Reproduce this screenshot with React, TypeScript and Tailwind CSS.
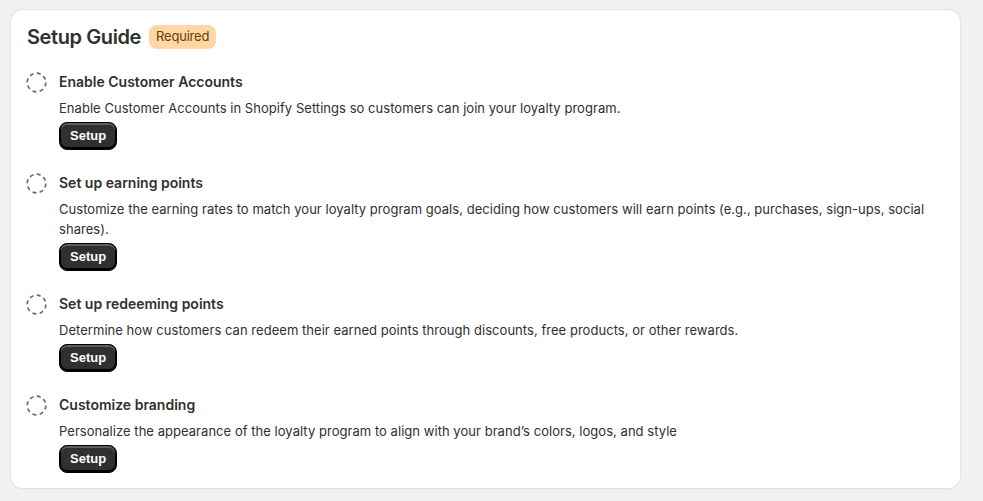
const steps = [
  {
    title: "Enable Customer Accounts",
    desc: "Enable Customer Accounts in Shopify Settings so customers can join your loyalty program.",
  },
  {
    title: "Set up earning points",
    desc: "Customize the earning rates to match your loyalty program goals, deciding how customers will earn points (e.g., purchases, sign-ups, social shares).",
  },
  {
    title: "Set up redeeming points",
    desc: "Determine how customers can redeem their earned points through discounts, free products, or other rewards.",
  },
  {
    title: "Customize branding",
    desc: "Personalize the appearance of the loyalty program to align with your brand’s colors, logos, and style",
  },
]

const DashedCircle = () => (
  <svg width="21" height="21" viewBox="0 0 21 21" fill="none" className="shrink-0 -ml-px">
    <circle cx="10.5" cy="10.5" r="9.3" stroke="#6b6b6b" strokeWidth="1.7" strokeDasharray="4 3.3" />
  </svg>
)

const Step = ({ title, desc }: { title: string; desc: string }) => {
  return (
    <div className="flex gap-[12px]">
      <DashedCircle />
      <div className="flex flex-col items-start">
        <h3 className="text-[14px] leading-5 font-semibold">{title}</h3>
        <p className="mt-[6px] text-[13px] leading-5 tracking-[0.04px] pr-4">{desc}</p>
        <button className="mt-1 h-7 px-[10px] rounded-lg bg-[#303030] text-white text-[13px] font-bold font-['Liberation_Sans',sans-serif] shadow-[inset_0_-1px_0_1px_#000,inset_0_1px_0_1px_rgba(255,255,255,0.22)] border border-black">
          Setup
        </button>
      </div>
    </div>
  )
}

export default function App() {
  return (
    <div className="min-h-[501px] bg-[#f1f1f1] pt-[10px] pl-[11px] font-['Inter',sans-serif] text-[#303030]">
      <div className="w-[949px] bg-white rounded-xl shadow-[0_0_0_1px_#e3e3e3,0_1px_1px_rgba(0,0,0,0.12)] px-[16px] pt-[15px] pb-[15px]">
        <div className="flex items-center gap-2">
          <h2 className="text-[20px] leading-6 font-semibold tracking-[-0.4px]">Setup Guide</h2>
          <span className="h-6 px-[7px] flex items-center rounded-lg bg-[#ffd6a4] text-[#5e4200] text-[13px] tracking-[-0.2px]">
            Required
          </span>
        </div>
        <div className="mt-[23px] flex flex-col gap-[23px]">
          {steps.map((s, i) => (
            <Step key={i} title={s.title} desc={s.desc} />
          ))}
        </div>
      </div>
    </div>
  )
}
